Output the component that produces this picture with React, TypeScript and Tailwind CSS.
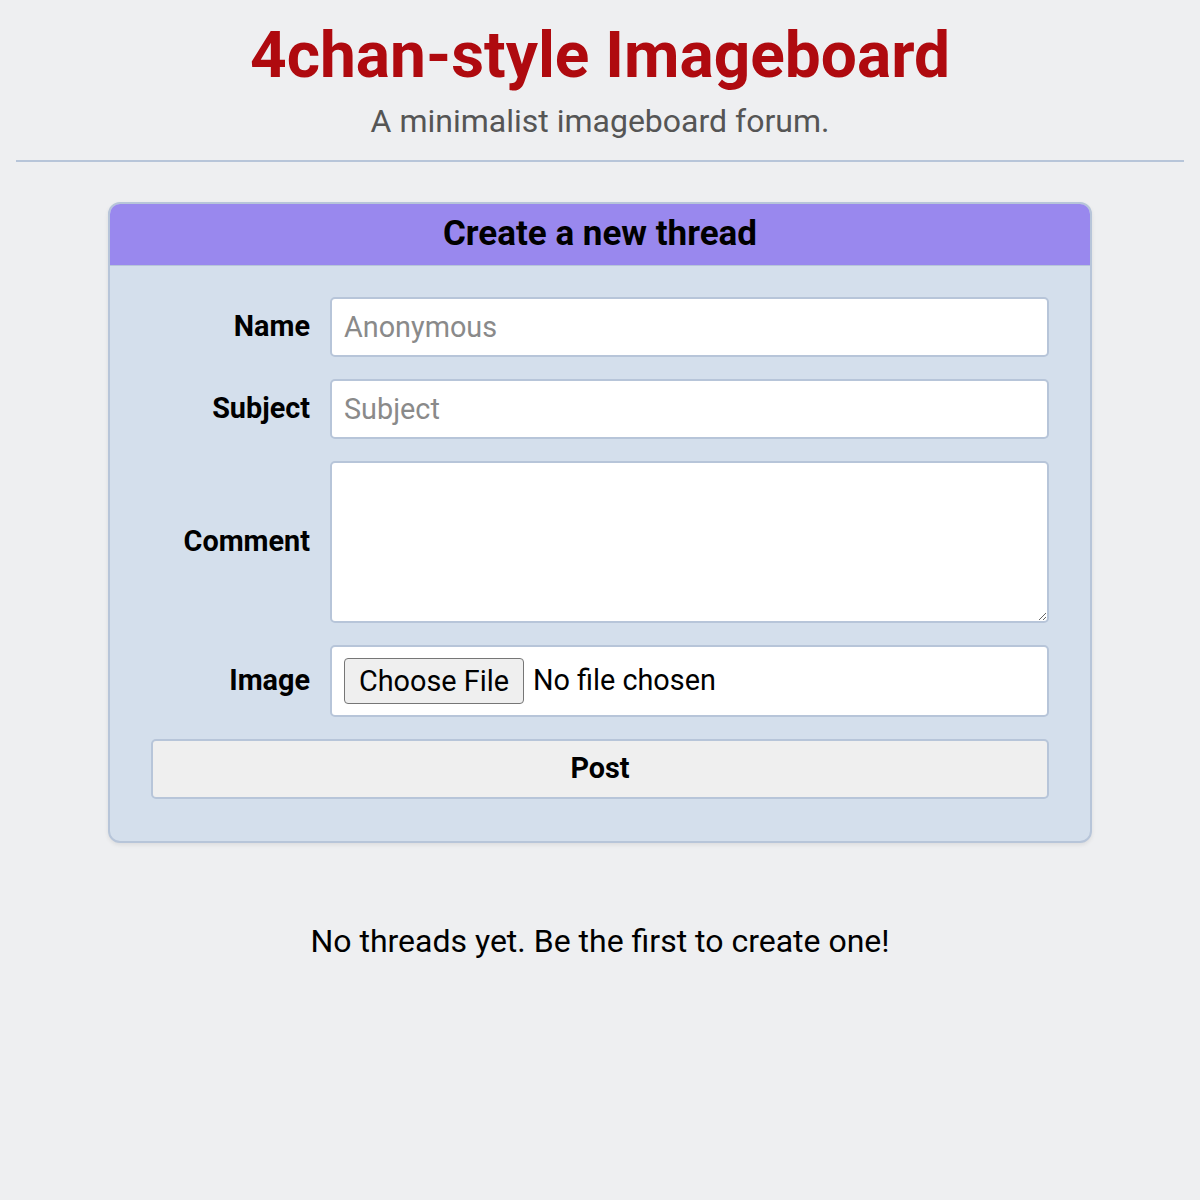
import React from 'react';

const rows = [
  { label: 'Name', placeholder: 'Anonymous' },
  { label: 'Subject', placeholder: 'Subject' },
];

export default function App() {
  return (
    <div className="min-h-screen bg-[#eeeff1] font-['Roboto',sans-serif] text-black">
      <header className="px-4 pt-[18px]">
        <h1 className="text-center text-[64px] font-bold leading-[76px] text-[#af0a0f]">4chan-style Imageboard</h1>
        <p className="text-center text-[32px] leading-[38px] text-[#555] mt-[8px]">A minimalist imageboard forum.</p>
        <hr className="mt-[20px] border-0 border-t-2 border-[#b7c5d9]" />
      </header>

      <main className="mx-auto mt-[40px] w-[984px]">
        <form
          className="overflow-hidden rounded-[12px] border-2 border-[#b7c5d9] bg-[#d4dfec] shadow-[0_2px_4px_rgba(0,0,0,0.08)]"
          onSubmit={(e) => e.preventDefault()}
        >
          <div className="flex h-[62px] items-center justify-center border-b border-[#b7c5d9] bg-[#9988ee]">
            <h2 className="text-[35px] font-bold">Create a new thread</h2>
          </div>

          <div className="grid grid-cols-[159px_1fr] gap-x-[20px] gap-y-[22px] px-[41px] pt-[31px] pb-[42px]">
            {rows.map((r) => (
              <React.Fragment key={r.label}>
                <label className="flex items-center justify-end text-[28.8px] font-bold">{r.label}</label>
                <input
                  type="text"
                  placeholder={r.placeholder}
                  className="h-[60px] rounded-[5px] border-2 border-[#b7c5d9] bg-white px-[12px] text-[28.8px] placeholder:text-[#8a8a8a] outline-none"
                />
              </React.Fragment>
            ))}

            <label className="flex items-center justify-end text-[28.8px] font-bold">Comment</label>
            <textarea className="h-[162px] resize-y rounded-[5px] border-2 border-[#b7c5d9] bg-white px-[12px] py-2 text-[28.8px] outline-none" />

            <label className="flex items-center justify-end text-[28.8px] font-bold">Image</label>
            <div className="flex h-[72px] items-center rounded-[5px] border-2 border-[#b7c5d9] bg-white px-[12px] text-[28.8px]">
              <button
                type="button"
                className="h-[46px] rounded-[4px] border border-[#767676] bg-[#efefef] px-[14px] text-[28.8px] leading-none"
              >
                Choose File
              </button>
              <span className="ml-[9px]">No file chosen</span>
            </div>

            <button
              type="submit"
              className="col-span-2 h-[60px] rounded-[5px] border-2 border-[#b7c5d9] bg-[#efefef] text-[28.8px] font-bold"
            >
              Post
            </button>
          </div>
        </form>

        <p className="mt-[74px] text-center text-[32px]">No threads yet. Be the first to create one!</p>
      </main>
    </div>
  );
}
